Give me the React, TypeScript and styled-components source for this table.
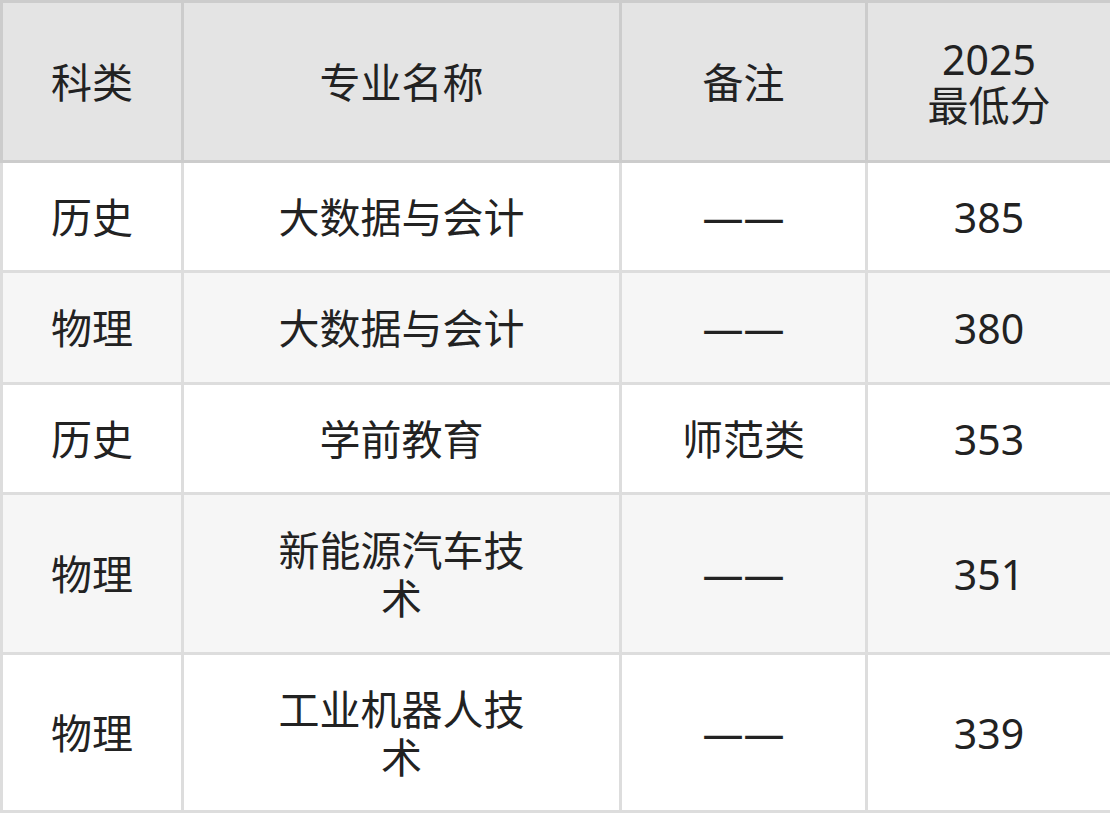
import styled, { createGlobalStyle } from 'styled-components';

const GlobalStyle = createGlobalStyle`
  html, body {
    margin: 0;
    padding: 0;
    background: #ffffff;
  }
`;

const Table = styled.table`
  width: 1110px;
  border-collapse: collapse;
  table-layout: fixed;
  font-family: 'Noto Sans', 'Noto Sans CJK SC', sans-serif;
  font-size: 41px;
  line-height: 46px;
  color: #222222;
`;

const HeadCell = styled.th`
  height: 157px;
  padding: 0;
  font-weight: 400;
  text-align: center;
  vertical-align: middle;
  background: #e4e4e4;
  border: 3px solid #cccccc;
`;

const Row = styled.tr<{ $alt?: boolean; $h: number }>`
  height: ${(p) => p.$h}px;
  background: ${(p) => (p.$alt ? '#f6f6f6' : '#ffffff')};
`;

const Cell = styled.td<{ $pad?: number }>`
  padding: 0 ${(p) => p.$pad ?? 20}px;
  text-align: center;
  vertical-align: middle;
  line-height: 48px;
  border: 3px solid #dddddd;
`;

const rows = [
  { type: '历史', major: '大数据与会计', note: '——', score: '385', h: 110 },
  { type: '物理', major: '大数据与会计', note: '——', score: '380', h: 112 },
  { type: '历史', major: '学前教育', note: '师范类', score: '353', h: 110 },
  { type: '物理', major: '新能源汽车技术', note: '——', score: '351', h: 160 },
  { type: '物理', major: '工业机器人技术', note: '——', score: '339', h: 158 },
];

export default function App() {
  return (
    <>
      <GlobalStyle />
      <Table>
        <colgroup>
          <col style={{ width: 181 }} />
          <col style={{ width: 438 }} />
          <col style={{ width: 246 }} />
          <col style={{ width: 245 }} />
        </colgroup>
        <thead>
          <tr>
            <HeadCell>科类</HeadCell>
            <HeadCell>专业名称</HeadCell>
            <HeadCell>备注</HeadCell>
            <HeadCell>
              2025
              <br />
              最低分
            </HeadCell>
          </tr>
        </thead>
        <tbody>
          {rows.map((r, i) => (
            <Row key={i} $alt={i % 2 === 1} $h={r.h}>
              <Cell>{r.type}</Cell>
              <Cell $pad={92}>{r.major}</Cell>
              <Cell>{r.note}</Cell>
              <Cell>{r.score}</Cell>
            </Row>
          ))}
        </tbody>
      </Table>
    </>
  );
}
